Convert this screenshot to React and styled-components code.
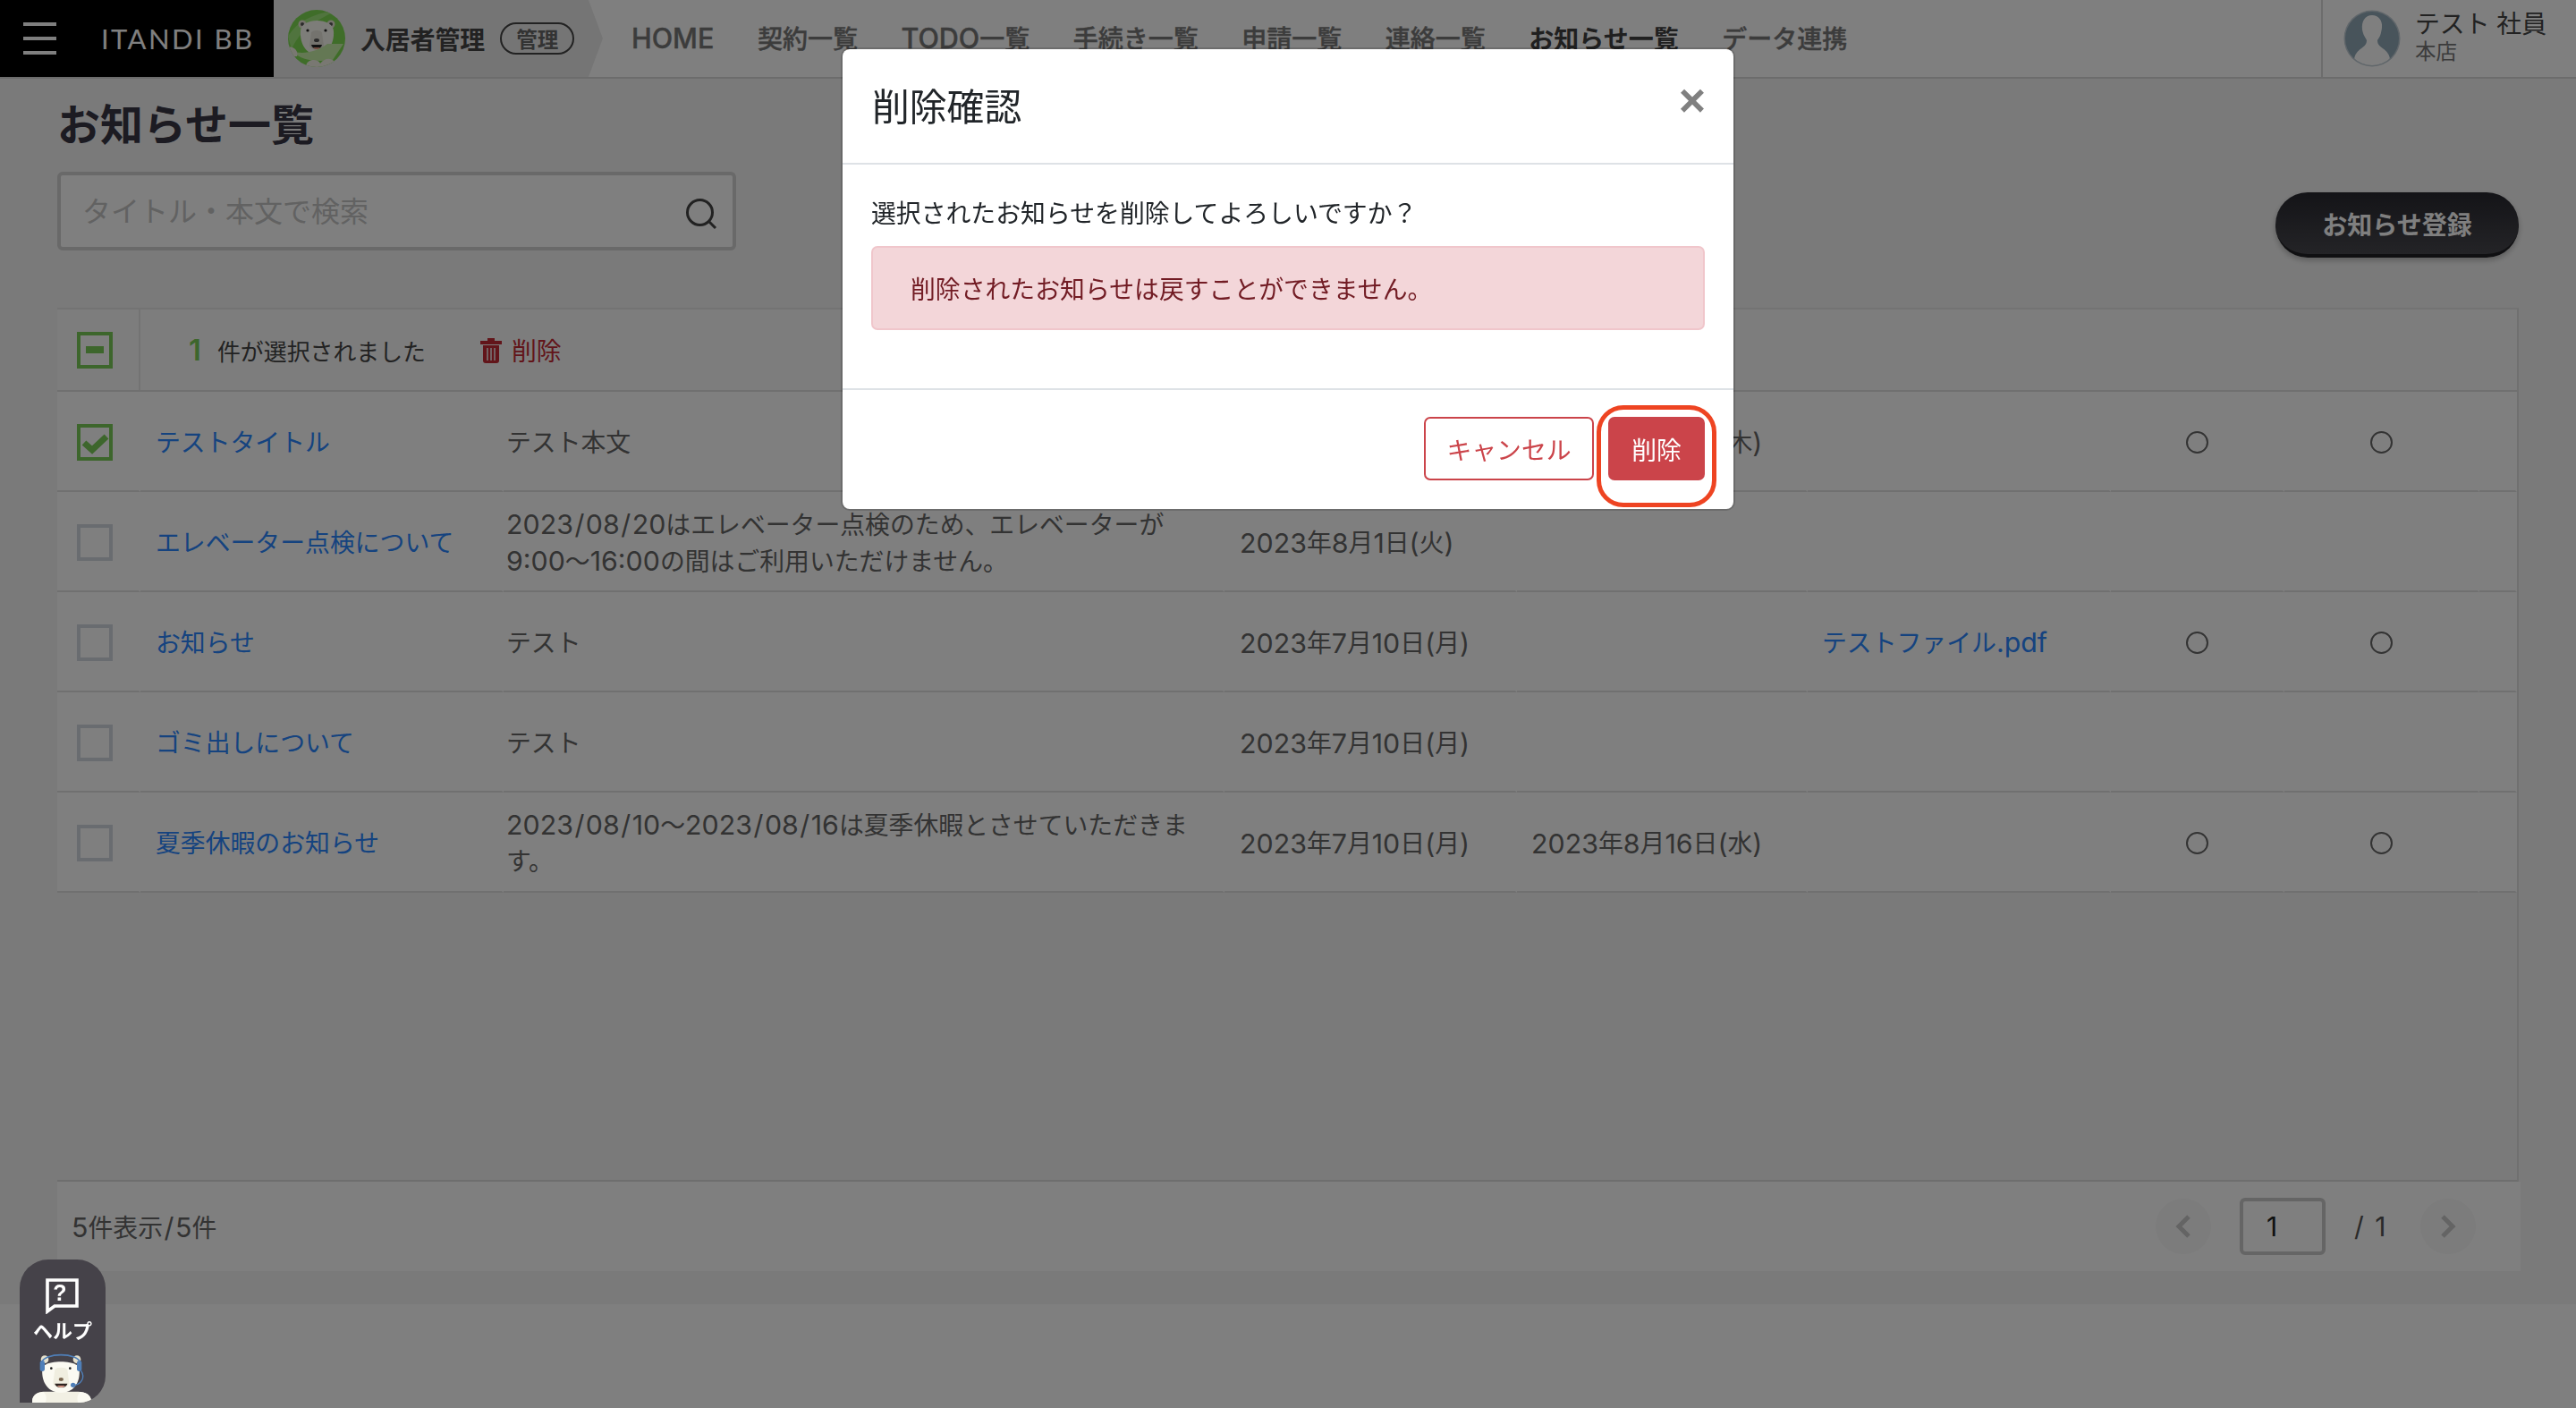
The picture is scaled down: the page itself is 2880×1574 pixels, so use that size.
import React from "react";
import styled, { createGlobalStyle } from "styled-components";

const Global = createGlobalStyle`
  html, body { margin: 0; padding: 0; background: #fff; }
  body { font-family: "Inter", "Noto Sans CJK JP", sans-serif; font-size: 27.85px; color: #666; overflow: hidden; }
  * { box-sizing: border-box; }
`;

const Page = styled.div`
  width: 2880px;
  height: 1574px;
  display: flex;
  flex-direction: column;
  background: #fff;
`;
const Header = styled.header`
  height: 88px;
  flex: none;
  display: flex;
  background: #fff;
  border-bottom: 2px solid #d8d8d8;
`;
const BrandBlock = styled.div`
  width: 306px;
  height: 86px;
  background: #000;
  display: flex;
  align-items: center;
  padding-left: 26px;
  gap: 50px;
`;
const Burger = styled.div`
  width: 37px;
  display: flex;
  flex-direction: column;
  gap: 12px;
  span { display: block; height: 4px; background: #fff; }
`;
const BrandName = styled.span`
  font-family: "Lato", sans-serif;
  font-weight: 400;
  font-size: 31px;
  letter-spacing: 2.4px;
  color: #fff;
  white-space: nowrap;
`;
const ProductBlock = styled.div`
  position: relative;
  width: 368px;
  height: 86px;
  background: #ebebeb;
  clip-path: polygon(0 0, 352px 0, 368px 43px, 352px 86px, 0 86px);
  display: flex;
  align-items: center;
  padding-left: 16px;
`;
const ProductName = styled.span`
  margin-left: 17px;
  font-weight: 700;
  color: #444;
  white-space: nowrap;
`;
const RoleBadge = styled.span`
  margin-left: 17px;
  width: 83px;
  height: 36px;
  border: 2px solid #444;
  border-radius: 18px;
  font-size: 23.5px;
  font-weight: 700;
  color: #666;
  display: flex;
  align-items: center;
  justify-content: center;
`;
const Nav = styled.nav`
  display: flex;
  align-items: center;
  gap: 48.5px;
  margin-left: 32px;
  margin-top: -2px;
  flex: 1;
`;
const NavItem = styled.span`
  font-weight: ${(p) => (p.$active ? 700 : 500)};
  color: ${(p) => (p.$active ? "#404040" : "#787878")};
  -webkit-text-stroke: ${(p) => (p.$active ? "0" : "0.4px #787878")};
  font-size: 28px;
  white-space: nowrap;
`;
const UserBlock = styled.div`
  width: 285px;
  height: 86px;
  border-left: 2px solid #d8d8d8;
  display: flex;
  align-items: center;
  padding-left: 23px;
  gap: 17px;
`;
const UserText = styled.div`
  display: flex;
  flex-direction: column;
  line-height: 1;
`;
const UserName = styled.span`
  color: #444;
  white-space: nowrap;
  line-height: 33px;
  margin-top: -4px;
  margin-left: -1px;
`;
const UserOffice = styled.span`
  color: #777;
  font-size: 23.5px;
  line-height: 27px;
  margin-left: -1px;
`;
const Latin = styled.span`
  font-size: 1.09em;
`;
const Slash = styled(Latin)`
  margin: 0 1.5px;
`;

const Main = styled.main`
  height: 1370px;
  flex: none;
  background: #f5f5f5;
  padding: 0 64px 37px;
  display: flex;
  flex-direction: column;
`;
const Title = styled.h1`
  margin: 24px 0 0;
  height: 56px;
  font-size: 48px;
  line-height: 56px;
  font-weight: 700;
  color: #383644;
`;
const Toolbar = styled.div`
  margin-top: 24px;
  height: 152px;
  display: flex;
  justify-content: space-between;
  align-items: flex-start;
`;
const SearchBox = styled.div`
  width: 759px;
  height: 88px;
  border: 4px solid #d2d2d2;
  border-radius: 6px;
  background: #fff;
  display: flex;
  align-items: center;
  justify-content: space-between;
  padding: 0 17px 0 24px;
`;
const Placeholder = styled.span`
  font-size: 32px;
  color: #c4c4c4;
  white-space: nowrap;
  margin-top: -4px;
`;
const SearchGlyph = styled.svg`
  margin-top: 6px;
`;
const RegisterButton = styled.button`
  margin-top: 23px;
  width: 272px;
  height: 73px;
  border: none;
  border-bottom: 4px solid #202024;
  border-radius: 36px;
  background: linear-gradient(#28282f, #48484e);
  color: #fff;
  font: 700 28px "Inter", "Noto Sans CJK JP", sans-serif;
  box-shadow: 0 3px 6px rgba(0, 0, 0, 0.25);
`;
const TablePanel = styled.section`
  flex: 1;
  display: flex;
  flex-direction: column;
  border-top: 2px solid #e6e6e6;
  border-right: 2px solid #e0e0e0;
  border-bottom: 2px solid #dcdcdc;
  background: #f5f5f5;
`;
const SelectionBar = styled.div`
  height: 92px;
  display: flex;
  align-items: center;
  background: #fafafa;
  border-bottom: 2px solid #e0e0e0;
`;
const SelectCell = styled.div`
  width: 93px;
  height: 100%;
  display: flex;
  align-items: center;
  padding-left: 22px;
  border-right: 2px solid #e6e6e6;
`;
const SelectedCount = styled.span`
  margin-left: 54px;
  font-weight: 600;
  font-size: 33px;
  color: #7acc58;
`;
const SelectedLabel = styled.span`
  margin-left: 18px;
  font-size: 25.9px;
  color: #444;
`;
const BulkDelete = styled.span`
  margin-left: 61px;
  display: flex;
  align-items: center;
  gap: 11px;
  color: #c42a34;
  font-size: 27.85px;
`;
const Row = styled.div`
  height: 112px;
  display: grid;
  grid-template-columns: 93px 406px 806px 327px 325px 339px 194px 218px 1fr;
  background: #fff;
`;
const Cell = styled.div`
  display: flex;
  align-items: center;
  justify-content: ${(p) => (p.$center ? "center" : "flex-start")};
  padding-left: ${(p) => p.$pad || 0}px;
  padding-top: 3px;
  border-bottom: 2px solid #e0e0e0;
  border-right: 2px solid #fff;
  color: #666;
  line-height: 40px;
`;
const LongText = styled.span`
  display: block;
  white-space: pre-line;
`;
const NoticeLink = styled.a`
  color: #2a86ff;
  white-space: nowrap;
`;
const Mark = styled.span`
  width: 25px;
  height: 25px;
  border: 2.5px solid #666;
  border-radius: 50%;
`;
const Box = styled.span`
  width: 40px;
  height: 41px;
  border: 4px solid ${(p) => (p.$on ? "#7acc58" : "#d2d8e0")};
  display: flex;
  align-items: center;
  justify-content: center;
  background: #fff;
`;
const Spacer = styled.div`
  flex: 1;
`;
const PanelFooter = styled.footer`
  height: 100px;
  margin-right: -2px;
  background: #fff;
  display: flex;
  align-items: center;
  padding: 0 0 0 16px;
`;
const FooterCount = styled.span`
  flex: 1;
  color: #666;
`;
const Pager = styled.div`
  display: flex;
  align-items: center;
  margin-right: 50px;
`;
const PageArrow = styled.span`
  width: 62px;
  height: 62px;
  border-radius: 50%;
  background: #f8f8f8;
  display: flex;
  align-items: center;
  justify-content: center;
`;
const PageInput = styled.div`
  width: 96px;
  height: 64px;
  margin: 0 32px 0 32px;
  border: 4px solid #cacaca;
  border-radius: 6px;
  display: flex;
  align-items: center;
  padding-left: 26px;
  color: #222;
  font-size: 30px;
`;
const PageTotal = styled.span`
  width: 74px;
  color: #555;
  font-size: 30px;
  word-spacing: 4px;
  white-space: nowrap;
`;

const Overlay = styled.div`
  position: fixed;
  inset: 0;
  background: rgba(0, 0, 0, 0.5);
`;
const Modal = styled.div`
  position: fixed;
  left: 942px;
  top: 55px;
  width: 996px;
  height: 514px;
  background: #fff;
  border-radius: 8px;
  box-shadow: 0 0 0 2px rgba(0, 0, 0, 0.15);
  display: flex;
  flex-direction: column;
`;
const ModalHead = styled.div`
  height: 129px;
  flex: none;
  border-bottom: 2px solid #dee2e6;
  display: flex;
  justify-content: space-between;
  padding: 34px 31px 0 33px;
`;
const ModalTitle = styled.h2`
  margin: 0;
  font-size: 41.8px;
  line-height: 62px;
  font-weight: 400;
  color: #212529;
`;
const CloseMark = styled.span`
  font: 700 52px/52px "Liberation Sans", sans-serif;
  color: #808080;
  margin-top: -3px;
`;
const ModalBody = styled.div`
  height: 250px;
  flex: none;
  padding: 35px 32px 0;
  color: #212529;
`;
const Question = styled.p`
  margin: 0;
  line-height: 40px;
  white-space: nowrap;
`;
const Alert = styled.div`
  margin-top: 16px;
  height: 94px;
  background: #f3d6d9;
  border: 2px solid #f0c6cb;
  border-radius: 7px;
  color: #721c24;
  display: flex;
  align-items: center;
  padding-left: 42px;
`;
const ModalFoot = styled.div`
  flex: 1;
  border-top: 2px solid #dee2e6;
  display: flex;
  justify-content: flex-end;
  align-items: flex-start;
  gap: 16px;
  padding: 30px 32px 0;
  position: relative;
`;
const ModalButton = styled.button`
  height: 71px;
  width: ${(p) => p.$w}px;
  border-radius: 7px;
  border: 2px solid #cb444a;
  background: ${(p) => (p.$solid ? "#cb444a" : "#fff")};
  color: ${(p) => (p.$solid ? "#fff" : "#cb444a")};
  font: 400 27.85px "Inter", "Noto Sans CJK JP", sans-serif;
  padding: 0;
`;
const Ring = styled.span`
  position: absolute;
  right: 19px;
  top: 17px;
  width: 134px;
  height: 114px;
  border: 5px solid #ee4422;
  border-radius: 30px;
`;

const HelpTab = styled.div`
  position: fixed;
  left: 22px;
  top: 1408px;
  width: 96px;
  height: 160px;
  background: #454249;
  border-radius: 32px 32px 30px 0;
  display: flex;
  flex-direction: column;
  align-items: center;
  padding-top: 21px;
  overflow: hidden;
`;
const HelpLabel = styled.span`
  margin-top: 4px;
  color: #fff;
  font-size: 22px;
  line-height: 30px;
  font-weight: 700;
  white-space: nowrap;
`;
const HelpBear = styled.svg`
  position: absolute;
  left: 14px;
  bottom: 0;
`;

const Mixed = ({ text }) =>
  text.split(/([0-9A-Za-z:().]+|\/)/).map((part, i) => {
    if (i % 2 === 0) return part;
    return part === "/" ? <Slash key={i}>{part}</Slash> : <Latin key={i}>{part}</Latin>;
  });

const Check = ({ state }) => (
  <Box $on={state !== "off"}>
    {state === "on" && (
      <svg width="32" height="33" viewBox="0 0 32 33">
        <path d="M4 17 L13 25 L29 10" fill="none" stroke="#7acc58" strokeWidth="7" />
      </svg>
    )}
    {state === "some" && (
      <svg width="20" height="8" viewBox="0 0 20 8">
        <rect width="20" height="8" fill="#7acc58" />
      </svg>
    )}
  </Box>
);

const SearchIcon = () => (
  <SearchGlyph width="36" height="36" viewBox="0 0 36 36">
    <circle cx="16.5" cy="16.5" r="14" fill="none" stroke="#444" strokeWidth="3" />
    <path d="M26 26 L34 34" stroke="#444" strokeWidth="3" />
  </SearchGlyph>
);

const Trash = () => (
  <svg width="24" height="29" viewBox="0 0 24 29">
    <path d="M0 4 H8 V1 H16 V4 H24 V8 H0 Z" fill="#c42a34" />
    <path d="M3 9 H21 V26 Q21 29 18 29 H6 Q3 29 3 26 Z" fill="#c42a34" />
    <path d="M8 12 V26 M12 12 V26 M16 12 V26" stroke="#f5f5f5" strokeWidth="1.5" />
  </svg>
);

const Chevron = ({ dir }) => (
  <svg width="18" height="26" viewBox="0 0 18 26">
    <path
      d={dir === "left" ? "M15 2 L4 13 L15 24" : "M3 2 L14 13 L3 24"}
      fill="none"
      stroke="#c8c8c8"
      strokeWidth="5"
    />
  </svg>
);

const ProductLogo = () => (
  <svg width="64" height="64" viewBox="0 0 64 64">
    <defs>
      <clipPath id="logoClip">
        <circle cx="32" cy="32" r="32" />
      </clipPath>
    </defs>
    <g clipPath="url(#logoClip)">
      <rect width="64" height="64" fill="#7edb52" />
      <path d="M0 30 C10 12 30 4 56 0 C36 10 16 18 4 44 Z" fill="#a0e87c" />
      <circle cx="16" cy="16" r="4.5" fill="#e8e4d4" />
      <circle cx="48" cy="16" r="4.5" fill="#e8e4d4" />
      <circle cx="16" cy="16" r="2" fill="#555" />
      <circle cx="48" cy="16" r="2" fill="#555" />
      <path d="M14 24 C14 8 51 8 51 24 C52 38 44 50 32 50 C21 50 13 38 14 24 Z" fill="#fbfaf2" />
      <path d="M26 26 C26 22 38 22 38 26 L40 40 C38 46 26 46 24 40 Z" fill="#e8e6dc" />
      <circle cx="22" cy="23" r="1.6" fill="#222" />
      <circle cx="42" cy="23" r="1.6" fill="#222" />
      <ellipse cx="32" cy="34" rx="3" ry="2" fill="#555" />
      <path d="M26 39 H38 C37 45 27 45 26 39 Z" fill="#222" />
      <path d="M28 42 H36 L34 44 H30 Z" fill="#e89a80" />
      <path d="M4 46 C16 50 30 48 44 38 H62 L50 56 C34 58 16 58 4 46 Z" fill="#c8f0a8" />
      <path d="M20 64 C20 54 34 54 36 60 C44 50 54 56 54 64 Z" fill="#f2f0e4" />
      <path d="M0 42 C6 40 12 46 10 52 L0 52 Z" fill="#f2f0e4" />
    </g>
  </svg>
);

const UserAvatar = () => (
  <svg width="64" height="64" viewBox="0 0 64 64">
    <defs>
      <clipPath id="userClip">
        <circle cx="32" cy="32" r="30" />
      </clipPath>
    </defs>
    <circle cx="32" cy="32" r="31.5" fill="#c0ccd4" />
    <g clipPath="url(#userClip)">
      <rect width="64" height="64" fill="#90a8b6" />
      <path d="M32 6 C24 6 20 13 21 22 C22 28 24 30 26 34 C26 40 22 41 18 45 L46 45 C42 41 38 40 38 34 C41 30 42 27 43 20 C44 12 39 6 32 6 Z" fill="#fff" />
      <ellipse cx="32" cy="56" rx="20" ry="16" fill="#fff" />
    </g>
  </svg>
);

const HelpIcon = () => (
  <svg width="42" height="40" viewBox="0 0 42 40">
    <path d="M7 2 H40 V31 H15 L7 37 V31 Z" transform="translate(-3 0)" fill="none" stroke="#fff" strokeWidth="3.6" />
    <text x="18" y="25" textAnchor="middle" fontFamily="Liberation Sans" fontWeight="700" fontSize="25" fill="#fff">?</text>
  </svg>
);

const Bear = () => (
  <HelpBear width="66" height="55" viewBox="108 640 198 165">
    <path d="M108 805 C106 782 124 768 146 768 H262 C290 768 308 784 306 805 Z" fill="#f2f0e4" />
    <path d="M108 805 C106 782 124 768 146 770 C158 780 156 795 152 805 Z" fill="#fbfaf2" />
    <path d="M306 805 C308 782 290 768 268 770 C258 780 258 795 262 805 Z" fill="#fbfaf2" />
    <circle cx="150" cy="660" r="13" fill="#e6e1cc" />
    <circle cx="258" cy="660" r="13" fill="#e6e1cc" />
    <path d="M142 692 C142 660 266 660 266 692 C270 735 250 772 205 772 C160 772 138 735 142 692 Z" fill="#fbfaf2" />
    <path d="M184 695 C188 685 222 685 226 695 L232 740 C228 762 182 762 178 740 Z" fill="#f0eee0" />
    <path d="M139 672 C145 636 264 636 270 672" fill="none" stroke="#4f7fb8" strokeWidth="5" />
    <rect x="134" y="664" width="16" height="36" rx="8" fill="#4f7fb8" />
    <rect x="258" y="664" width="16" height="36" rx="8" fill="#4f7fb8" />
    <path d="M272 698 C288 722 270 746 246 746" fill="none" stroke="#4f7fb8" strokeWidth="4" />
    <circle cx="245" cy="746" r="8" fill="#4f7fb8" />
    <circle cx="172" cy="690" r="4" fill="#222" />
    <circle cx="235" cy="690" r="4" fill="#222" />
    <ellipse cx="205" cy="727" rx="8" ry="6" fill="#7a6650" />
    <path d="M184 741 H226 C224 758 186 758 184 741 Z" fill="#2e2420" />
    <path d="M192 748 H218 C214 755 196 755 192 748 Z" fill="#e8a090" />
  </HelpBear>
);

const rows = [
  { title: "テストタイトル", state: "on", body: "テスト本文", start: "2023年8月10日(木)", end: "2023年8月31日(木)", marks: true },
  { title: "エレベーター点検について", state: "off", body: "2023/08/20はエレベーター点検のため、エレベーターが\n9:00〜16:00の間はご利用いただけません。", start: "2023年8月1日(火)" },
  { title: "お知らせ", state: "off", body: "テスト", start: "2023年7月10日(月)", file: "テストファイル.pdf", marks: true },
  { title: "ゴミ出しについて", state: "off", body: "テスト", start: "2023年7月10日(月)" },
  { title: "夏季休暇のお知らせ", state: "off", body: "2023/08/10〜2023/08/16は夏季休暇とさせていただきま\nす。", start: "2023年7月10日(月)", end: "2023年8月16日(水)", marks: true },
];

const navItems = ["HOME", "契約一覧", "TODO一覧", "手続き一覧", "申請一覧", "連絡一覧", "お知らせ一覧", "データ連携"];

export default function App() {
  return (
    <>
      <Global />
      <Page>
        <Header>
          <BrandBlock>
            <Burger>
              <span />
              <span />
              <span />
            </Burger>
            <BrandName>ITANDI BB</BrandName>
          </BrandBlock>
          <ProductBlock>
            <ProductLogo />
            <ProductName>入居者管理</ProductName>
            <RoleBadge>管理</RoleBadge>
          </ProductBlock>
          <Nav>
            {navItems.map((n) => (
              <NavItem key={n} $active={n === "お知らせ一覧"}>
                <Mixed text={n} />
              </NavItem>
            ))}
          </Nav>
          <UserBlock>
            <UserAvatar />
            <UserText>
              <UserName>テスト 社員</UserName>
              <UserOffice>本店</UserOffice>
            </UserText>
          </UserBlock>
        </Header>
        <Main>
          <Title>お知らせ一覧</Title>
          <Toolbar>
            <SearchBox>
              <Placeholder>タイトル・本文で検索</Placeholder>
              <SearchIcon />
            </SearchBox>
            <RegisterButton>お知らせ登録</RegisterButton>
          </Toolbar>
          <TablePanel>
            <SelectionBar>
              <SelectCell>
                <Check state="some" />
              </SelectCell>
              <SelectedCount>1</SelectedCount>
              <SelectedLabel>件が選択されました</SelectedLabel>
              <BulkDelete>
                <Trash />
                削除
              </BulkDelete>
            </SelectionBar>
            {rows.map((r) => (
              <Row key={r.title}>
                <Cell $pad={22}>
                  <Check state={r.state} />
                </Cell>
                <Cell $pad={17}>
                  <NoticeLink>{r.title}</NoticeLink>
                </Cell>
                <Cell $pad={3}>
                  <LongText>
                    <Mixed text={r.body} />
                  </LongText>
                </Cell>
                <Cell $pad={17}>
                  <Mixed text={r.start} />
                </Cell>
                <Cell $pad={16}>{r.end && <Mixed text={r.end} />}</Cell>
                <Cell $pad={16}>
                  {r.file && (
                    <NoticeLink>
                      <Mixed text={r.file} />
                    </NoticeLink>
                  )}
                </Cell>
                <Cell $center>{r.marks && <Mark />}</Cell>
                <Cell $center>{r.marks && <Mark />}</Cell>
                <Cell />
              </Row>
            ))}
            <Spacer />
          </TablePanel>
          <PanelFooter>
            <FooterCount>
              <Mixed text="5件表示/5件" />
            </FooterCount>
            <Pager>
              <PageArrow>
                <Chevron dir="left" />
              </PageArrow>
              <PageInput>1</PageInput>
              <PageTotal>/ 1</PageTotal>
              <PageArrow>
                <Chevron dir="right" />
              </PageArrow>
            </Pager>
          </PanelFooter>
        </Main>
      </Page>
      <Overlay />
      <Modal>
        <ModalHead>
          <ModalTitle>削除確認</ModalTitle>
          <CloseMark>×</CloseMark>
        </ModalHead>
        <ModalBody>
          <Question>選択されたお知らせを削除してよろしいですか？</Question>
          <Alert>削除されたお知らせは戻すことができません。</Alert>
        </ModalBody>
        <ModalFoot>
          <ModalButton $w={190}>キャンセル</ModalButton>
          <ModalButton $w={108} $solid>
            削除
          </ModalButton>
          <Ring />
        </ModalFoot>
      </Modal>
      <HelpTab>
        <HelpIcon />
        <HelpLabel>ヘルプ</HelpLabel>
        <Bear />
      </HelpTab>
    </>
  );
}
